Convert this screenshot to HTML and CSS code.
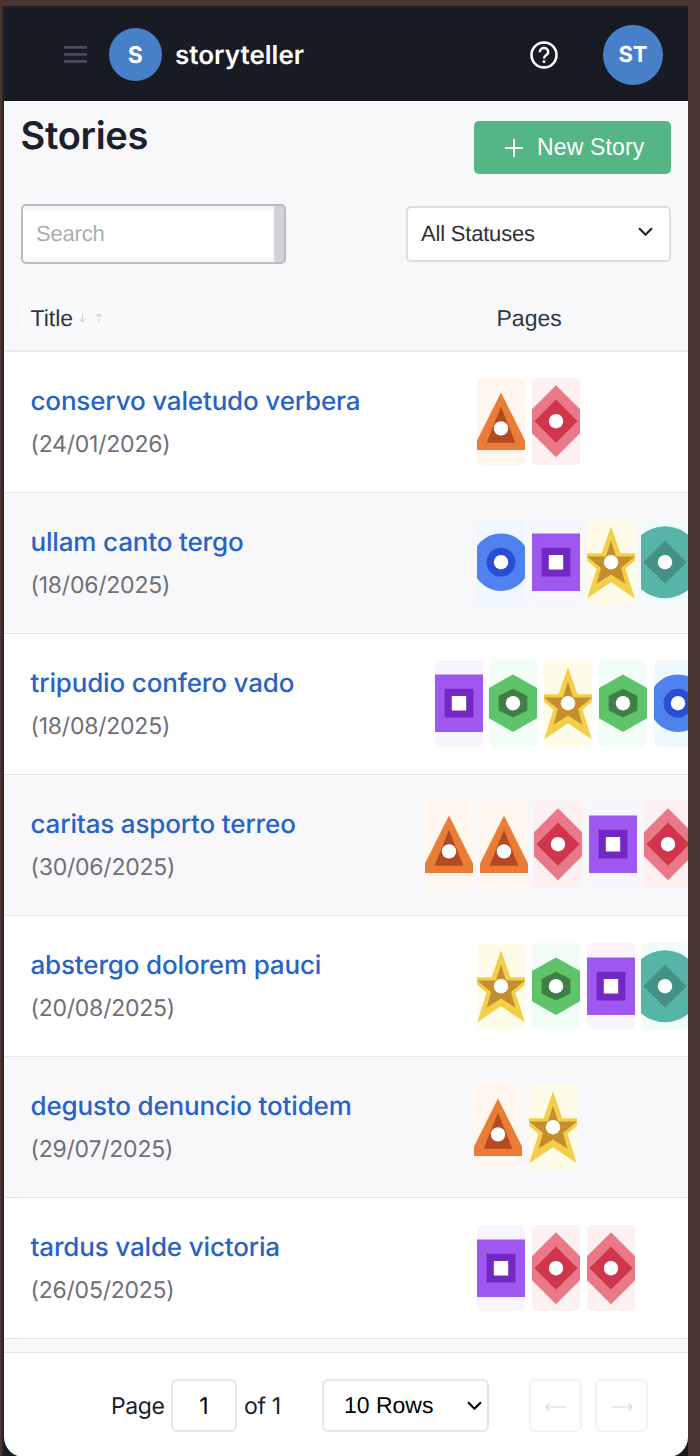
FILE: index.html
```
<!DOCTYPE html>
<html lang="en">
<head>
<meta charset="utf-8">
<title>Stories</title>
<link rel="stylesheet" href="styles.css">
</head>
<body>
<svg class="defs" aria-hidden="true">
  <symbol id="triangle" viewBox="-33.333 -60 66.667 120"><path fill="#e97c36" d="M0-40 40 40H-40Z"/><path fill="#b44a21" d="M0-20 20 30H-20Z"/><circle cy="10" r="10" fill="#fff"/></symbol>
  <symbol id="diamond" viewBox="-33.333 -60 66.667 120"><path fill="#e97989" d="M0-50 50 0 0 50-50 0Z"/><path fill="#d1354d" d="M0-30 30 0 0 30-30 0Z"/><circle r="10" fill="#fff"/></symbol>
  <symbol id="circle" viewBox="-33.333 -60 66.667 120"><circle r="40" fill="#4f82ee"/><circle r="20" fill="#294dd3"/><circle r="10" fill="#fff"/></symbol>
  <symbol id="square" viewBox="-33.333 -60 66.667 120"><path fill="#9e58ef" d="M-40-40H40V40H-40Z"/><path fill="#7328c5" d="M-20-20H20V20H-20Z"/><path fill="#fff" d="M-10-10H10V10H-10Z"/></symbol>
  <symbol id="star" viewBox="-33.333 -60 66.667 120"><path fill="#f3ce49" d="M0-50 13-12.500H45L20 9 33 50 0 28-33 50-20 9-45-12.500H-13Z"/><path fill="#c48d30" d="M0-30 7-8H33L14 8 20 30 0 17-20 30-14 8-33-8H-7Z"/><circle r="10" fill="#fff"/></symbol>
  <symbol id="hexagon" viewBox="-33.333 -60 66.667 120"><path fill="#5fc36a" d="M0-40 35-20V20L0 40-35 20V-20Z"/><path fill="#3f7f47" d="M0-20 20-10V10L0 20-20 10V-10Z"/><circle r="10" fill="#fff"/></symbol>
  <symbol id="orb" viewBox="-33.333 -60 66.667 120"><circle r="50" fill="#56b5a7"/><path fill="#449286" d="M0-30 30 0 0 30-30 0Z"/><circle r="10" fill="#fff"/></symbol>
</svg>
<div class="app">
  <header class="topbar">
    <svg class="menu" viewBox="0 0 23 17"><path d="M0 1.400H23M0 8.400H23M0 15.400H23"/></svg>
    <span class="logo">S</span>
    <span class="brand">storyteller</span>
    <svg class="help" viewBox="0 0 28 28"><circle cx="14" cy="14" r="12.500"/><path d="M9.800 11.300C9.800 5.700 18.200 5.700 18.200 11.300C18.200 14.100 14 14.100 14 17.600"/><path d="M14 19.300V22"/></svg>
    <span class="avatar">ST</span>
  </header>
  <section class="heading">
    <h1>Stories</h1>
    <button class="new"><svg viewBox="0 0 18 18"><path d="M9 0V18M0 9H18"/></svg>New Story</button>
  </section>
  <section class="filters">
    <div class="search"><span class="search-text">Search</span></div>
    <div class="status">All Statuses<svg class="chevron" viewBox="0 0 14 8"><path d="M1 1 7 7 13 1"/></svg></div>
  </section>
  <div class="table-head">
    <div class="head-strip"><span class="col-title">Title</span><svg class="sort" viewBox="0 0 24 10"><path d="M3.500 0V8.500M.7 6 3.500 8.800 6.300 6M20 9.500V1M17.200 3.500 20 .7 22.800 3.500"/></svg><span class="col-pages">Pages</span></div>
  </div>
  <main class="rows">
    <article class="row"><div class="info"><a>conservo valetudo verbera</a><time>(24/01/2026)</time></div><div class="pages"><svg class="tile orange"><use href="#triangle"/></svg><svg class="tile red"><use href="#diamond"/></svg></div></article>
    <article class="row"><div class="info"><a>ullam canto tergo</a><time>(18/06/2025)</time></div><div class="pages"><svg class="tile blue"><use href="#circle"/></svg><svg class="tile purple"><use href="#square"/></svg><svg class="tile yellow"><use href="#star"/></svg><svg class="tile teal"><use href="#orb"/></svg></div></article>
    <article class="row"><div class="info info-mid"><a>tripudio confero vado</a><time>(18/08/2025)</time></div><div class="pages"><svg class="tile purple"><use href="#square"/></svg><svg class="tile green"><use href="#hexagon"/></svg><svg class="tile yellow"><use href="#star"/></svg><svg class="tile green"><use href="#hexagon"/></svg><svg class="tile blue"><use href="#circle"/></svg></div></article>
    <article class="row"><div class="info info-narrow"><a>caritas asporto terreo</a><time>(30/06/2025)</time></div><div class="pages"><svg class="tile orange"><use href="#triangle"/></svg><svg class="tile orange"><use href="#triangle"/></svg><svg class="tile red"><use href="#diamond"/></svg><svg class="tile purple"><use href="#square"/></svg><svg class="tile red"><use href="#diamond"/></svg></div></article>
    <article class="row"><div class="info"><a>abstergo dolorem pauci</a><time>(20/08/2025)</time></div><div class="pages"><svg class="tile yellow"><use href="#star"/></svg><svg class="tile green"><use href="#hexagon"/></svg><svg class="tile purple"><use href="#square"/></svg><svg class="tile teal"><use href="#orb"/></svg></div></article>
    <article class="row"><div class="info info-wide"><a>degusto denuncio totidem</a><time>(29/07/2025)</time></div><div class="pages"><svg class="tile orange"><use href="#triangle"/></svg><svg class="tile yellow"><use href="#star"/></svg></div></article>
    <article class="row"><div class="info"><a>tardus valde victoria</a><time>(26/05/2025)</time></div><div class="pages"><svg class="tile purple"><use href="#square"/></svg><svg class="tile red"><use href="#diamond"/></svg><svg class="tile red"><use href="#diamond"/></svg></div></article>
  </main>
  <footer class="pager">
    <span class="page-label">Page</span><span class="box page-number">1</span><span class="total">of 1</span>
    <span class="box row-count">10 Rows<svg class="chevron" viewBox="0 0 14 8"><path d="M1 1 7 7 13 1"/></svg></span>
    <span class="box arrow"><svg viewBox="0 0 22 8"><path d="M21.500 4H1M4.500 .5 1 4 4.500 7.500"/></svg></span>
    <span class="box arrow next"><svg viewBox="0 0 22 8"><path d="M.5 4H21M17.500 .5 21 4 17.500 7.500"/></svg></span>
  </footer>
</div>
</body>
</html>
```
FILE: styles.css
```
* { box-sizing: border-box; }
body { margin: 0; height: 1456px; overflow: hidden; padding: 6px 12px 0 2px; background: #4a3533; font-family: Inter, "Liberation Sans", sans-serif; color: #1a202c; text-rendering: geometricPrecision; }
svg { display: block; flex: none; fill: none; }
.defs { position: absolute; width: 0; height: 0; }
.app { height: 1450px; display: flex; flex-direction: column; overflow: hidden; background: #181b24; border-left: 2px solid #292323; border-top: 2px solid #24211f; }

.topbar { height: 93px; flex: none; display: flex; align-items: center; padding: 0 25px 0 60px; color: #fff; background: #181b24; }
.menu { width: 23px; height: 17px; stroke: #454c60; stroke-width: 2.6; }
.logo, .avatar { flex: none; display: flex; align-items: center; justify-content: center; border-radius: 50%; background: #4780c8; font-weight: 700; }
.logo { width: 53.500px; height: 53.500px; margin-left: 21.500px; font-size: 23px; }
.brand { margin-left: 13px; padding-top: 2px; font-size: 26px; font-weight: 600; }
.help { width: 28px; height: 28px; margin-left: auto; stroke: #fff; stroke-width: 2.5; }
.avatar { width: 60px; height: 60px; margin-left: 45.500px; font-size: 22px; }

.heading { height: 80px; flex: none; display: flex; justify-content: space-between; align-items: flex-start; padding: 20px 17px 0 16.500px; background: #f8f8fb; }
h1 { margin: -8px 0 0; font-size: 38px; line-height: 46px; font-weight: 600; letter-spacing: -.3px; }
.new { width: 197px; height: 53px; padding: 0 0 0 31px; display: flex; align-items: center; gap: 14px; border: 0; border-radius: 5px; color: #fff; background: #55b685; font: 23px "Liberation Sans", sans-serif; letter-spacing: .15px; white-space: nowrap; }
.new svg { width: 18px; height: 18px; stroke: #fff; stroke-width: 2; }

.filters { height: 122px; flex: none; display: flex; justify-content: space-between; align-items: flex-start; padding: 23px 17px 0; background: #f8f8fb; font: 22px "Liberation Sans", sans-serif; letter-spacing: -.2px; }
.search { width: 265px; height: 60px; padding: 5px 11px 5px 0; border: 2px solid #bbbbc2; border-radius: 5px; background: linear-gradient(90deg, #f8f8fb 251px, #d2d2da 251px); color: #adadad; }
.search-text { display: flex; align-items: center; height: 46px; padding: 0 0 0 13px; background: #fff; }
.status { width: 265px; height: 56px; margin-top: 2px; padding: 0 16px 0 13px; display: flex; align-items: center; justify-content: space-between; border: 2px solid #dedee0; border-radius: 5px; color: #303030; background: #fff; }
.chevron { width: 15px; height: 9px; stroke: #222; stroke-width: 2; }
.status .chevron { margin-top: -5px; }

.table-head { height: 48.500px; flex: none; padding: .5px 0 0 16px; border-bottom: 2px solid #ebebed; background: #f8f8fb; }
.head-strip { height: 29px; display: flex; align-items: center; padding-left: 10.500px; background: #f9fafc; color: #2d3748; font: 23px "Liberation Sans", sans-serif; }
.col-title { width: 48px; }
.sort { width: 24px; height: 10px; stroke: #d5d8df; stroke-width: 1.2; }
.col-pages { margin-left: 394px; }

.rows { height: 1000px; flex: none; background: #f8f8fb; }
.row { height: 141.080px; display: flex; overflow: hidden; border-bottom: 1.5px solid #e6e6e8; background: #fff; }
.row:nth-child(even) { background: #f8f8fb; }
.info { width: 473px; flex: none; padding: 34.500px 0 0 26.500px; }
.info-mid { width: 430.500px; }
.info-narrow { width: 420.800px; }
.info-wide { width: 469.800px; }
.info a { display: block; font-size: 26px; line-height: 32px; font-weight: 500; letter-spacing: -.16px; color: #2863c5; white-space: nowrap; }
.info time { display: block; margin-top: 12px; font-size: 23px; line-height: 28px; letter-spacing: -.22px; color: #707078; }
.pages { display: flex; gap: 6.800px; padding-top: 26.700px; }
.tile { width: 48px; height: 86.400px; border-radius: 5px; }
.orange { background: #fff6ed; }
.red { background: #fdf0f1; }
.blue { background: #eff7ff; }
.purple { background: #f8f5ff; }
.yellow { background: #fefce9; }
.green { background: #f1fdf5; }
.teal { background: #f0fcf9; }

.pager { height: 105px; flex: none; display: flex; align-items: center; padding: 2px 40px 0 107px; border-top: 1.500px solid #e8e8ea; border-radius: 0 0 20px 20px; background: #fff; font-size: 23px; white-space: nowrap; }
.box { height: 53px; display: flex; align-items: center; border: 2px solid #e5e5eb; border-radius: 6px; color: #000; }
.page-label { width: 60px; letter-spacing: -.4px; }
.page-number { width: 66px; justify-content: center; }
.total { width: 85px; padding-left: 7px; letter-spacing: -.3px; }
.row-count { width: 167px; justify-content: space-between; padding: 0 5px 0 20px; font-family: "Liberation Sans", sans-serif; }
.row-count .chevron { stroke: #000; }
.arrow { width: 53px; margin-left: 40px; justify-content: center; padding-top: 3px; border-color: #f3f3f5; }
.next { margin-left: 13px; }
.arrow svg { width: 22px; height: 8px; stroke: #d8d8d8; stroke-width: 1.2; }
```
